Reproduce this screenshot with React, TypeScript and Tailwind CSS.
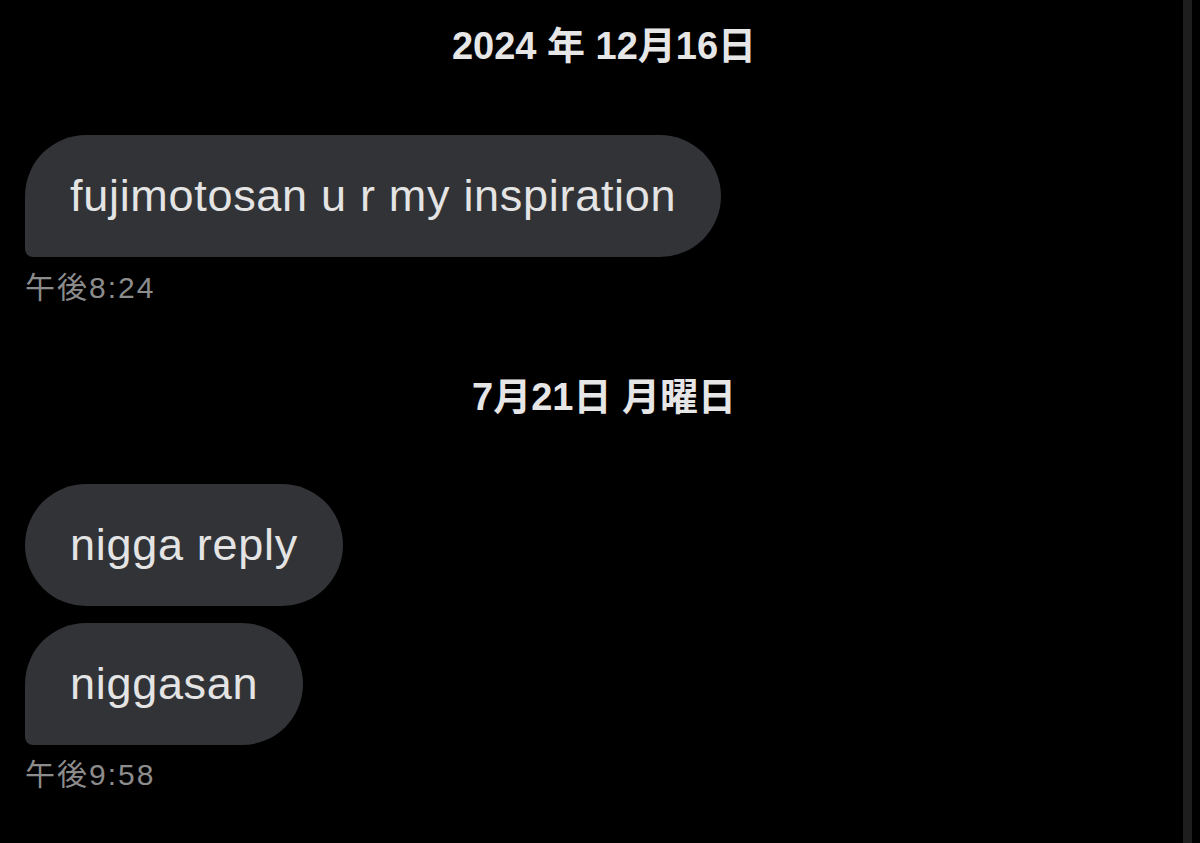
import React from 'react';

const DateLabel: React.FC<{ text: string }> = ({ text }) => (
  <div className="text-center text-[38px] font-bold text-[#e6e6e6] leading-none">{text}</div>
);

const Bubble: React.FC<{ text: string; tail?: boolean }> = ({ text, tail }) => (
  <div
    className={`self-start h-[122px] flex items-center pl-[45px] pr-[45px] bg-[#313336] text-[45px] tracking-[0.7px] text-[#e4e4e4] rounded-[61px] ${
      tail ? 'rounded-bl-[8px]' : ''
    }`}
  >
    {text}
  </div>
);

const Time: React.FC<{ text: string }> = ({ text }) => (
  <div className="text-[30px] tracking-[2px] text-[#8c8c8c] leading-none">{text}</div>
);

export default function App() {
  return (
    <div
      className="w-[1200px] h-[843px] bg-black flex overflow-hidden"
      style={{ fontFamily: '"Liberation Sans", "Noto Sans CJK JP", sans-serif' }}
    >
      <div className="flex-1 flex flex-col pl-[25px] pt-[27px]">
        <DateLabel text="2024 年 12月16日" />
        <div className="h-[70px]" />
        <Bubble text="fujimotosan u r my inspiration" tail />
        <div className="h-[16px]" />
        <Time text="午後8:24" />
        <div className="h-[75px]" />
        <DateLabel text="7月21日 月曜日" />
        <div className="h-[68px]" />
        <Bubble text="nigga reply" />
        <div className="h-[17px]" />
        <Bubble text="niggasan" tail />
        <div className="h-[15px]" />
        <Time text="午後9:58" />
      </div>
      <div className="w-[9px] mr-[8px] bg-[#1e1e1e]" />
    </div>
  );
}
